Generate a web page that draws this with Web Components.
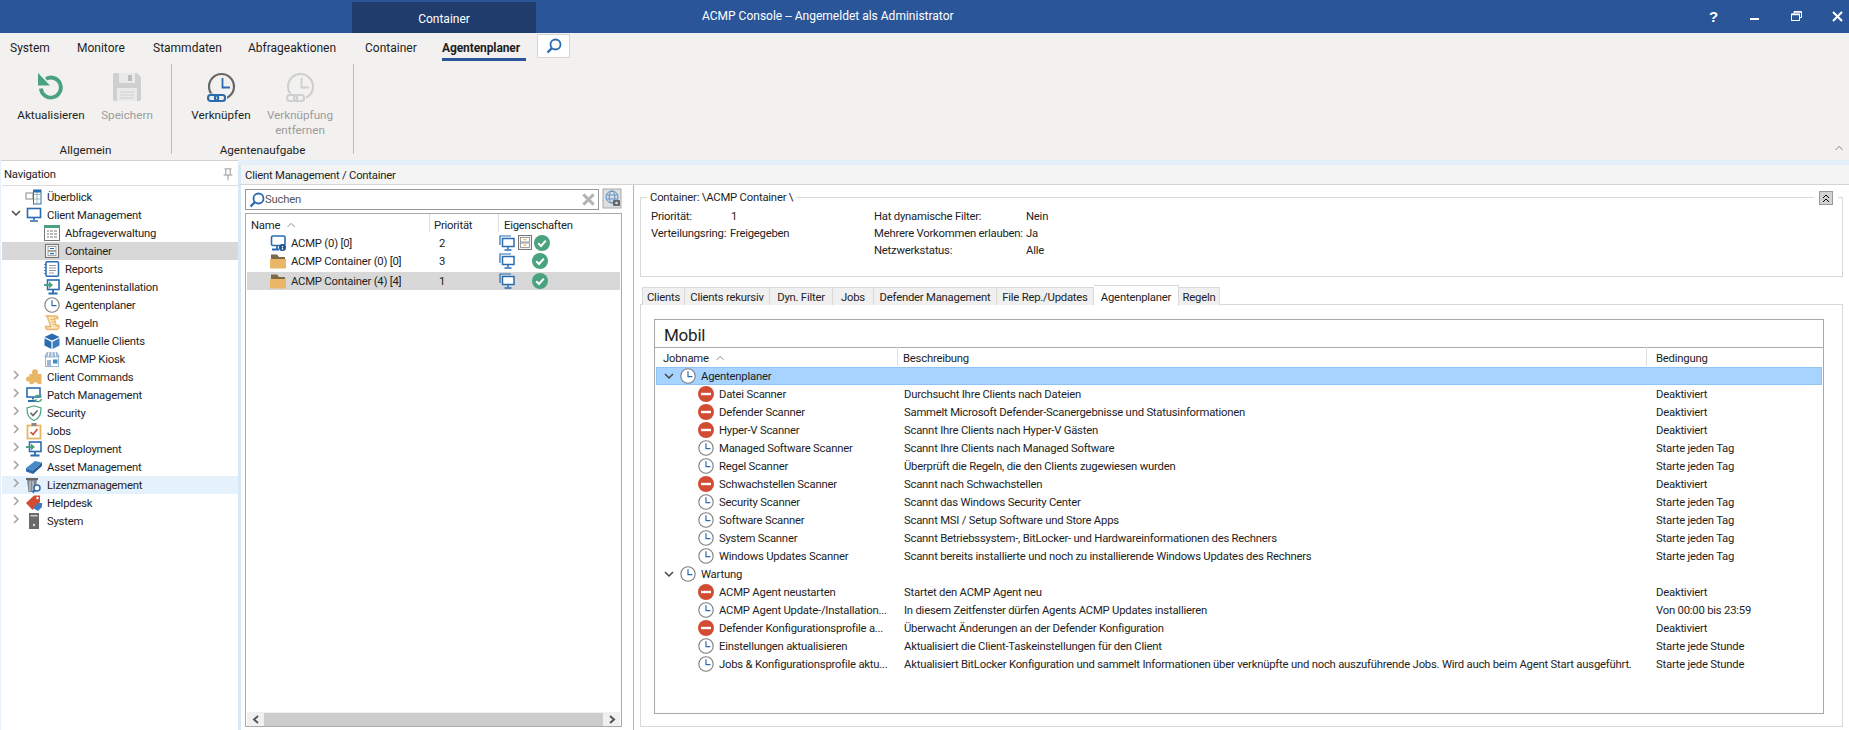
<!DOCTYPE html>
<html lang="de"><head><meta charset="utf-8"><title>ACMP Console</title>
<style>
html,body{margin:0;padding:0;background:#fff;overflow:hidden}
body{font:11.3px/16px Roboto,"Open Sans","Liberation Sans",sans-serif;letter-spacing:-.22px;color:#1e1e1e}
</style></head><body>
<acmp-window>
  <title-bar slot="title"></title-bar>
  <menu-bar slot="menu"></menu-bar>
  <ribbon-bar slot="ribbon"></ribbon-bar>
  <nav-panel slot="nav">
    <tree-row level="1" icon="overview">Überblick</tree-row>
    <tree-row level="1" icon="monitor" exp="open">Client Management</tree-row>
    <tree-row level="2" icon="table">Abfrageverwaltung</tree-row>
    <tree-row level="2" icon="drawer" state="sel">Container</tree-row>
    <tree-row level="2" icon="report">Reports</tree-row>
    <tree-row level="2" icon="install">Agenteninstallation</tree-row>
    <tree-row level="2" icon="clock">Agentenplaner</tree-row>
    <tree-row level="2" icon="scroll">Regeln</tree-row>
    <tree-row level="2" icon="cube">Manuelle Clients</tree-row>
    <tree-row level="2" icon="kiosk">ACMP Kiosk</tree-row>
    <tree-row level="1" icon="puzzle" exp="closed">Client Commands</tree-row>
    <tree-row level="1" icon="patch" exp="closed">Patch Management</tree-row>
    <tree-row level="1" icon="shield" exp="closed">Security</tree-row>
    <tree-row level="1" icon="clipboard" exp="closed">Jobs</tree-row>
    <tree-row level="1" icon="install" exp="closed">OS Deployment</tree-row>
    <tree-row level="1" icon="asset" exp="closed">Asset Management</tree-row>
    <tree-row level="1" icon="license" exp="closed" state="hover">Lizenzmanagement</tree-row>
    <tree-row level="1" icon="tag" exp="closed">Helpdesk</tree-row>
    <tree-row level="1" icon="tower" exp="closed">System</tree-row>
  </nav-panel>
  <content-area slot="content">
    <container-list slot="left">
      <list-row icon="clientinfo" prio="2" props="monitor drawer2 check">ACMP (0) [0]</list-row>
      <list-row icon="folder" prio="3" props="monitor gap check">ACMP Container (0) [0]</list-row>
      <list-row icon="folder" prio="1" props="monitor gap check" selected>ACMP Container (4) [4]</list-row>
    </container-list>
    <details-pane slot="right">
      <job-grid>
        <job-group title="Agentenplaner" selected>
          <job-row icon="stop" desc="Durchsucht Ihre Clients nach Dateien" cond="Deaktiviert">Datei Scanner</job-row>
          <job-row icon="stop" desc="Sammelt Microsoft Defender-Scanergebnisse und Statusinformationen" cond="Deaktiviert">Defender Scanner</job-row>
          <job-row icon="stop" desc="Scannt Ihre Clients nach Hyper-V Gästen" cond="Deaktiviert">Hyper-V Scanner</job-row>
          <job-row icon="clock" desc="Scannt Ihre Clients nach Managed Software" cond="Starte jeden Tag">Managed Software Scanner</job-row>
          <job-row icon="clock" desc="Überprüft die Regeln, die den Clients zugewiesen wurden" cond="Starte jeden Tag">Regel Scanner</job-row>
          <job-row icon="stop" desc="Scannt nach Schwachstellen" cond="Deaktiviert">Schwachstellen Scanner</job-row>
          <job-row icon="clock" desc="Scannt das Windows Security Center" cond="Starte jeden Tag">Security Scanner</job-row>
          <job-row icon="clock" desc="Scannt MSI / Setup Software und Store Apps" cond="Starte jeden Tag">Software Scanner</job-row>
          <job-row icon="clock" desc="Scannt Betriebssystem-, BitLocker- und Hardwareinformationen des Rechners" cond="Starte jeden Tag">System Scanner</job-row>
          <job-row icon="clock" desc="Scannt bereits installierte und noch zu installierende Windows Updates des Rechners" cond="Starte jeden Tag">Windows Updates Scanner</job-row>
        </job-group>
        <job-group title="Wartung">
          <job-row icon="stop" desc="Startet den ACMP Agent neu" cond="Deaktiviert">ACMP Agent neustarten</job-row>
          <job-row icon="clock" desc="In diesem Zeitfenster dürfen Agents ACMP Updates installieren" cond="Von 00:00 bis 23:59">ACMP Agent Update-/Installation...</job-row>
          <job-row icon="stop" desc="Überwacht Änderungen an der Defender Konfiguration" cond="Deaktiviert">Defender Konfigurationsprofile a...</job-row>
          <job-row icon="clock" desc="Aktualisiert die Client-Taskeinstellungen für den Client" cond="Starte jede Stunde">Einstellungen aktualisieren</job-row>
          <job-row icon="clock" desc="Aktualisiert BitLocker Konfiguration und sammelt Informationen über verknüpfte und noch auszuführende Jobs. Wird auch beim Agent Start ausgeführt." cond="Starte jede Stunde">Jobs &amp; Konfigurationsprofile aktu...</job-row>
        </job-group>
      </job-grid>
    </details-pane>
  </content-area>
</acmp-window>
<script>
const B='#2b6cb0',G='#4aa37e',R='#d24c34',O='#e9b566',Y='#777';
const monitor=(c=B)=>`<rect x="1.5" y="1.5" width="13" height="9" fill="#fff" stroke="${c}" stroke-width="1.6"/><path d="M8 11v2M4 14h8" stroke="${c}" stroke-width="1.6"/>`;
const chain=(c,bg)=>`<rect x="0" y="20.5" width="20" height="8.500" fill="${bg}"/><g fill="none" stroke="${c}" stroke-width="2.200"><rect x="1.100" y="22" width="10" height="6" rx="2.500"/><rect x="8" y="22" width="10" height="6" rx="2.500"/></g>`;
const ICONS={
clock:`<circle cx="8" cy="8" r="7.2" fill="#fff" stroke="#7d7d7d" stroke-width="1.1"/><path d="M8 3.2V8.7H12.4" fill="none" stroke="${B}" stroke-width="1.2"/>`,
stop:`<circle cx="8" cy="8" r="8" fill="${R}"/><rect x="3" y="6.8" width="10" height="2.4" fill="#fff"/>`,
check:`<circle cx="8" cy="8" r="8" fill="${G}"/><path d="M4.2 8.3L7 11l4.8-5.4" fill="none" stroke="#fff" stroke-width="2"/>`,
monitor:monitor(),
monitor2:`<path d="M1 10V1h11" fill="none" stroke="${B}" stroke-width="1.2"/><rect x="3.5" y="3.5" width="11.5" height="8" fill="#fff" stroke="${B}" stroke-width="1.5"/><path d="M9 12v2M5.5 15h7" stroke="${B}" stroke-width="1.5"/>`,
drawer2:`<rect x=".5" y=".5" width="13" height="14" fill="#f2f2f2" stroke="#777"/><rect x="2.500" y="2.500" width="9" height="4.500" fill="#fff" stroke="#888" stroke-width=".8"/><rect x="2.500" y="8" width="9" height="4.500" fill="#fff" stroke="#888" stroke-width=".8"/><path d="M5.500 4.700h3M5.500 10.200h3" stroke="${O}" stroke-width="1.200"/>`,
drawer:`<rect x="1.5" y="1.5" width="13" height="13" fill="#fff" stroke="#777" stroke-width="1.2"/><rect x="4" y="3.5" width="8" height="4" fill="#fff" stroke="#888" stroke-width=".8"/><rect x="4" y="8.7" width="8" height="4" fill="#fff" stroke="#888" stroke-width=".8"/><path d="M6 5.5h4M6 10.7h4" stroke="${B}" stroke-width="1.2"/>`,
overview:`<rect x="0" y="4" width="7" height="6" fill="#fff" stroke="#888"/><rect x="7.5" y="1" width="7.5" height="14" fill="#fff" stroke="${B}"/><path d="M7.5 5.5h7.5M7.5 10h7.5M11 1v14" stroke="#8aa" stroke-width=".8"/><rect x="7.5" y="1" width="7.5" height="2.5" fill="${B}"/>`,
table:`<rect x=".5" y=".5" width="15" height="15" fill="#fff" stroke="#777"/><rect x="0" y="0" width="16" height="3" fill="${G}"/><path d="M3 6h2m1 0h3m1 0h3M3 9h2m1 0h3m1 0h3M3 12h2m1 0h3m1 0h3" stroke="#777"/>`,
report:`<rect x="2" y=".8" width="12.5" height="14.4" rx="1" fill="#fff" stroke="${B}" stroke-width="1.5"/><path d="M5 4.5h7M5 7h7M5 9.5h7M5 12h5" stroke="#999"/><path d="M1 3v1m0 2v1m0 2v1m0 2v1" stroke="${B}" stroke-width="1.6"/>`,
install:`<rect x="3.5" y="1" width="11.5" height="9.5" fill="#fff" stroke="${B}" stroke-width="1.6"/><path d="M9 11v2.5M4.5 14.5h9" stroke="${B}" stroke-width="1.8"/><path d="M0 6h6" stroke="${G}" stroke-width="2"/><path d="M5 2.5L9 6 5 9.5z" fill="${G}"/>`,
scroll:`<path d="M1.500 1h10c1.500 0 2.500 1 2.500 2.500h-3.500c0 3 1.500 4 1.500 7h3c0 2.500-1 4-2.500 4H4c-2 0-2.500-1.500-2.500-3h5C6.500 8 4 6 4 3.500 4 2.500 3 1 1.500 1z" fill="#f7e3bd" stroke="${O}" stroke-width="1.300"/><path d="M6.500 4.500h3M7.500 7h3M8.500 9.500h2.500" stroke="${O}" stroke-width="1.100"/>`,
cube:`<path d="M8 .5L15.5 4 8 7.5.5 4z" fill="${B}"/><path d="M.5 5.2L7.4 8.7V16L.5 12.5z" fill="${B}"/><path d="M15.5 5.2L8.6 8.7V16l6.9-3.5z" fill="#3a7cbf"/>`,
kiosk:`<path d="M3 1h10l3 5H0z" fill="#9db8d4"/><path d="M5 1L4 6M8 1v5M11 1l1 5" stroke="#fff"/><rect x="1.5" y="6" width="13" height="9.5" fill="#fff" stroke="#9db8d4"/><rect x="3" y="9" width="4" height="6.5" fill="#9db8d4"/><rect x="9" y="8.5" width="4.5" height="4" fill="#3b8fc4"/>`,
puzzle:`<rect x="3.500" y="5" width="12" height="10" fill="${O}"/><circle cx="9" cy="3.200" r="3" fill="${O}"/><circle cx="2.600" cy="10" r="2.600" fill="${O}"/><circle cx="9.500" cy="15.500" r="2.200" fill="#fff"/>`,
patch:`<rect x="1" y="1" width="13" height="9" fill="#fff" stroke="${B}" stroke-width="1.6"/><path d="M7 10.500v2M2 14h8" stroke="${B}" stroke-width="1.8"/><path d="M8.500 11a3.500 3.500 0 0 1 6-1.500M15.500 12a3.500 3.500 0 0 1-6 1.500" fill="none" stroke="${G}" stroke-width="1.3"/><path d="M15.500 7.500v3h-3zM8.500 15.500v-3h3z" fill="${G}"/>`,
shield:`<path d="M8 .8L15 3c0 6-1 10-7 12.500C2 13 1 9 1 3z" fill="#fff" stroke="${G}" stroke-width="1.2"/><path d="M4.500 7.800L7 10.500 11.500 5.500" fill="none" stroke="#666" stroke-width="1.6"/>`,
clipboard:`<rect x="1.5" y="2.500" width="13" height="13" fill="#fff" stroke="${O}" stroke-width="1.8"/><rect x="5.500" y="0" width="5" height="3" fill="#888"/><path d="M4.500 9L7 11.500 11.500 6" fill="none" stroke="${R}" stroke-width="1.6"/>`,
asset:`<path d="M0 9L9 2l7 1.500-9 8z" fill="#4c8ac7"/><path d="M0 9l7 2.500V15L0 12.500z" fill="${B}"/><path d="M7 11.500l9-8V7l-9 8z" fill="#245d99"/>`,
license:`<path d="M1 3h10l-1.500 12H2.500z" fill="#7f8a90"/><rect x="0" y="1" width="12" height="2" fill="#666"/><path d="M4 4v10M7 4v10" stroke="#ddd"/><circle cx="11" cy="11" r="3" fill="#fff" stroke="${B}" stroke-width="1.5"/><path d="M8.800 13.200L6.500 15.500" stroke="${B}" stroke-width="2"/>`,
tag:`<path d="M0 8L8 0.500h6V7L6.500 15z" fill="${R}"/><circle cx="11.500" cy="3" r="1.200" fill="#fff"/><path d="M7 13l5-5h4v4l-4 4z" fill="#3a7cbf"/>`,
tower:`<rect x="3" y="0" width="10" height="16" fill="#6a6a6a"/><rect x="4.500" y="2" width="7" height="1.500" fill="#ccc"/><circle cx="8" cy="12" r="1.200" fill="#ddd"/>`,
clientinfo:`<rect x="1.500" y="1" width="13.500" height="9.500" rx="1.500" fill="#fff" stroke="${B}" stroke-width="1.600"/><path d="M7 11v2.500M2 14.500h7" stroke="${B}" stroke-width="1.800"/><circle cx="12.500" cy="12.500" r="3.500" fill="#23568f"/><path d="M12.500 11v.900M12.500 12.600v2" stroke="#fff" stroke-width="1.200"/>`,
folder:`<path d="M1 1.500h6l2 2.500h6v2H1z" fill="#7a6a45"/><path d="M0 6h16v8.500c0 .5-.5 1-1 1H1c-.5 0-1-.5-1-1z" fill="${O}"/>`,
refresh:`<path d="M9 5.800A10 10 0 1 1 3.900 15.500" fill="none" stroke="${G}" stroke-width="3.800"/><path d="M1 0v12.500h12z" fill="${G}"/>`,
save:`<path d="M0 2q0-2 2-2h22l4 4v22q0 2-2 2H2q-2 0-2-2z" fill="#cfcfcf"/><rect x="6" y="0" width="16" height="10" fill="#e9e9e9"/><rect x="15" y="2" width="4" height="6" fill="#bdbdbd"/><rect x="4" y="15" width="20" height="13" fill="#e9e9e9"/><path d="M7 19h14M7 22h14M7 25h14" stroke="#cfcfcf"/>`,
link:`<circle cx="14.500" cy="13.500" r="12.500" fill="none" stroke="#666" stroke-width="2.200"/><path d="M15.500 5V14.500H23" fill="none" stroke="${B}" stroke-width="1.800"/>${chain(B,'#f2f1ef')}`,
linkoff:`<circle cx="14.500" cy="13.500" r="12.500" fill="none" stroke="#cfcfcf" stroke-width="2.200"/><path d="M15.500 5V14.500H23" fill="none" stroke="#cfcfcf" stroke-width="1.800"/>${chain('#cfcfcf','#f2f1ef')}`,
search:`<circle cx="9.500" cy="6.500" r="5" fill="none" stroke="${B}" stroke-width="1.800"/><path d="M6 10L1.500 14.500" stroke="${B}" stroke-width="2.400"/>`,
globe:`<rect x="0" y="0" width="18" height="19" fill="#dedede" stroke="#aaa"/><circle cx="9" cy="8" r="6" fill="none" stroke="#5a93c8"/><ellipse cx="9" cy="8" rx="2.800" ry="6" fill="none" stroke="#5a93c8"/><path d="M3 6h12M3 10h12" stroke="#5a93c8"/><rect x="10" y="11" width="7" height="6" rx="1" fill="#666"/><circle cx="13.500" cy="14" r="1.300" fill="#dedede"/>`,
open:`<path d="M4 6l4 4 4-4" fill="none" stroke="#444" stroke-width="1.500"/>`,
closed:`<path d="M6 4l4 4-4 4" fill="none" stroke="#a5a5a5" stroke-width="1.600"/>`,
up:`<path d="M3 9l4-4 4 4" fill="none" stroke="#777" stroke-width="1"/>`,
pin:`<path d="M4 1h8M5.500 1.500v6M10.500 1.500v6M3 8h10M8 8v6" fill="none" stroke="#888"/>`,
x:`<path d="M2.500 2.500L13.500 13.500M13.500 2.500L2.500 13.500" stroke="#b4b4b4" stroke-width="3.200"/>`
};
function def(name,css,html){customElements.define(name,class extends HTMLElement{
  constructor(){super();this.attachShadow({mode:'open'}).innerHTML=`<style>${css}</style>${typeof html==='function'?'':html}`}
  connectedCallback(){if(typeof html==='function'&&!this._d){this._d=1;this.shadowRoot.innerHTML+=html(this)}}
})}
def('ui-icon',':host{display:inline-flex;flex:none}svg{display:block;overflow:visible}',e=>{
  const s=e.getAttribute('size')||16,v=e.getAttribute('vb')||16;
  return `<svg width="${s}" height="${s}" viewBox="0 0 ${v} ${v}">${ICONS[e.getAttribute('name')]||''}</svg>`});
def('acmp-window',`:host{display:grid;width:1849px;height:730px;overflow:hidden;grid-template-rows:33px 29px 98px 1fr;grid-template-columns:238px 1fr;grid-template-areas:"t t" "m m" "r r" "n c";background:#fff}
 ::slotted([slot=title]){grid-area:t}::slotted([slot=menu]){grid-area:m}::slotted([slot=ribbon]){grid-area:r}::slotted([slot=nav]){grid-area:n}::slotted([slot=content]){grid-area:c}`,
 `<slot name="title"></slot><slot name="menu"></slot><slot name="ribbon"></slot><slot name="nav"></slot><slot name="content"></slot>`);
def('title-bar',`:host{display:grid;grid-template-columns:352px 184px 1fr 41px 41px 41px 32px;background:#2a5699;color:#fff;line-height:33px;align-items:center;letter-spacing:0;font-variant-ligatures:none}
 .ctx{grid-column:2;background:#1f3c6d;text-align:center;height:33px;line-height:35px;font-size:12px}
 .t{padding-left:166px;font-size:12px;padding-bottom:3px}.b{display:flex;padding-left:15px;height:20px;align-items:center;margin-bottom:4px}
 .q{font:bold 15px "Liberation Sans";padding-left:15px}svg{display:block}`,
 `<div class="ctx">Container</div><div class="t">ACMP Console -- Angemeldet als Administrator</div>
 <div class="b q">?</div>
 <div class="b"><svg width="10" height="10"><rect y="7" width="9" height="2" fill="#fff"/></svg></div>
 <div class="b"><svg width="11" height="11" fill="none" stroke="#fff"><path d="M3 2.500V.5h7.500v6h-2"/><rect x=".5" y="3" width="8" height="6.500"/><path d="M1 3.500h7M3 1h7" stroke-width="1.400"/></svg></div>
 <div class="b"><svg width="11" height="11"><path d="M1 1l9 9M10 1l-9 9" stroke="#fff" stroke-width="2"/></svg></div>`);
def('menu-bar',`:host{display:grid;grid-template-columns:10px 67px 76px 95px 117px 77px 95px auto 1fr;background:#f2f1ef;height:29px;align-items:start;line-height:31px;font-size:12px;letter-spacing:0}
 .on{font-weight:700;height:28px;width:84px;border-bottom:3px solid #2a5699;box-sizing:border-box;white-space:nowrap;letter-spacing:-.1px}
 .s{width:33px;height:24px;background:#fff;border:1px solid #d6d6d6;box-sizing:border-box;margin-top:1px;display:flex;align-items:center;justify-content:center}
 i{font-style:normal}`,
 `<i></i><i>System</i><i>Monitore</i><i>Stammdaten</i><i>Abfrageaktionen</i><i>Container</i><span class="on">Agentenplaner</span><span class="s"><ui-icon name="search"></ui-icon></span>`);
def('ribbon-bar',`:host{display:flex;background:#f2f1ef;line-height:15px;border-bottom:1px solid #d6d0cc;box-sizing:border-box;height:99px;font-size:11.700px;letter-spacing:0}
 .g{display:grid;grid-template-rows:72px 17px;border-right:1px solid #bdbdbd;height:90px;margin-top:2px;box-sizing:border-box;padding-top:7px}
 .g1{width:172px;padding-left:13px;box-sizing:border-box}.g2{width:182px}
 .bs{display:flex}.btn{display:flex;flex-direction:column;align-items:center;text-align:center}
 .ic{height:32px;margin-bottom:5px;display:flex;align-items:center}.off{color:#9c9c9c}
 .l{text-align:center;margin-left:-13px}.g2 .l{margin:0}
 .u{margin-left:auto;align-self:flex-end;margin-right:2px;margin-bottom:4px}`,
 `<div class="g g1"><div class="bs"><div class="btn" style="width:76px"><div class="ic"><ui-icon name="refresh" size="28" vb="28"></ui-icon></div>Aktualisieren</div>
 <div class="btn off" style="width:76px"><div class="ic"><ui-icon name="save" size="28" vb="28"></ui-icon></div>Speichern</div></div><div class="l">Allgemein</div></div>
 <div class="g g2"><div class="bs"><div class="btn" style="width:98px"><div class="ic"><ui-icon name="link" size="28" vb="28"></ui-icon></div>Verknüpfen</div>
 <div class="btn off" style="width:60px"><div class="ic"><ui-icon name="linkoff" size="28" vb="28"></ui-icon></div>Verknüpfung entfernen</div></div><div class="l">Agentenaufgabe</div></div>
 <ui-icon class="u" name="up" size="14"></ui-icon>`);
def('nav-panel',`:host{display:block;padding:5px 0 0 1px;border-left:1px solid #e8f1f9;box-sizing:border-box;min-height:0}
 .h{display:flex;justify-content:space-between;align-items:center;height:20px;padding:0 3px 0 2px;border:1px solid #dcdcdc;border-width:0 0 1px;margin-bottom:2px}`,
 `<div class="h">Navigation<ui-icon name="pin" size="14"></ui-icon></div><slot></slot>`);
def('tree-row',`:host{display:flex;align-items:center;height:18px;white-space:nowrap}
 :host([state=sel]){background:#d8d8d8}:host([state=hover]){background:#e5f1fb}
 :host([level="1"]){padding-left:6px}:host([level="2"]){padding-left:42px}
 .e{width:16px;flex:none}.i{margin:0 5px 0 2px}:host([level="2"]) .i{margin:0 5px 0 0}.x{padding-top:2px}`,
 e=>`${e.getAttribute('level')==='1'?`<span class="e">${e.hasAttribute('exp')?`<ui-icon name="${e.getAttribute('exp')}"></ui-icon>`:''}</span>`:''}<ui-icon class="i" name="${e.getAttribute('icon')}"></ui-icon><span class="x"><slot></slot></span>`);
def('content-area',`:host{display:grid;grid-template-columns:7px 377px 18px 1fr;grid-template-rows:5px 20px 1fr;min-height:0}
 .b{grid-column:1/-1;background:#e4eff9}.c{grid-column:1/-1;background:#f4f4f4;border-bottom:1px solid #d4d4d4;border-left:3px solid #d6e9f8;padding-left:4px;line-height:21px}
 .sp{background:linear-gradient(90deg,#d6e9f8 3px,#fff 3px)}.d:after{content:"";display:block;width:1px;height:100%;background:#b5b5b5;margin-left:11px}
 ::slotted([slot=left]){min-height:0}`,
 `<div class="b"></div><div class="c">Client Management / Container</div><div class="sp"></div><slot name="left"></slot><div class="d"></div><slot name="right"></slot>`);
def('container-list',`:host{display:grid;grid-template-rows:21px 1fr;gap:3px;padding:4px 0 3px;box-sizing:border-box}
 .top{display:flex;justify-content:space-between}.s{width:354px;box-sizing:border-box;border:1px solid #999;display:flex;align-items:center;padding:0 2px 0 3px;color:#555}
 .s ui-icon:last-child{margin-left:auto}.box{border:1px solid #aaa;display:grid;grid-template-rows:20px 1fr 14px;padding:0 1px 0 0;min-height:0}
 .h{display:grid;grid-template-columns:183px 69px 1fr;line-height:24px}.h span{padding-left:5px;white-space:nowrap}.h span+span{border-left:1px solid #dfdfdf;height:18px;padding-left:4px}.h span+span+span{padding-left:5px}
 .h ui-icon{vertical-align:middle;margin-left:5px}
 .sb{display:grid;grid-template-columns:17px 1fr 17px;background:#f0f0f0;margin-left:1px;align-items:center}.th{background:#cdcdcd;height:13px}
 .sb svg{display:block;margin:auto}`,
 `<div class="top"><div class="s"><ui-icon name="search"></ui-icon>Suchen<ui-icon name="x" size="15"></ui-icon></div><ui-icon name="globe" size="19" vb="19"></ui-icon></div>
 <div class="box"><div class="h"><span>Name<ui-icon name="up" size="14"></ui-icon></span><span>Priorität</span><span>Eigenschaften</span></div>
 <div><slot></slot></div>
 <div class="sb"><svg width="8" height="9"><path d="M6 1L2 4.500 6 8" fill="none" stroke="#555" stroke-width="2"/></svg><div class="th"></div><svg width="8" height="9"><path d="M2 1l4 3.500L2 8" fill="none" stroke="#555" stroke-width="2"/></svg></div></div>`);
def('list-row',`:host{display:grid;grid-template-columns:183px 69px 1fr;height:18px;align-items:center;margin-left:1px;white-space:nowrap}
 :host([selected]){background:#d8d8d8;margin-top:2px}
 .n{display:flex;align-items:center;padding-left:23px;gap:5px}.p{padding:2px 0 0 9px}.x{padding-top:2px}.pr{display:flex;align-items:center}.gap{width:17px}.dr{margin:0 0 0 3px}`,
 e=>`<div class="n"><ui-icon name="${e.getAttribute('icon')}"></ui-icon><span class="x"><slot></slot></span></div><div class="p">${e.getAttribute('prio')}</div><div class="pr">${e.getAttribute('props').split(' ').map(p=>p==='gap'?'<span class="gap"></span>':`<ui-icon ${p==='drawer2'?'class="dr"':''} name="${p==='monitor'?'monitor2':p}"></ui-icon>`).join('')}</div>`);
def('details-pane',`:host{display:grid;grid-template-rows:auto 1fr;margin-right:6px;min-height:0;padding-bottom:3px;box-sizing:border-box}
 .fs{border:1px solid #d8d8d8;height:80px;margin-top:12px;box-sizing:border-box;position:relative;display:grid;grid-template-columns:223px 152px 1fr;grid-auto-rows:17px;padding:10px 0 0 10px;line-height:17px;align-content:start;white-space:nowrap}
 .leg{position:absolute;left:6px;top:-8px;background:#fff;padding:0 3px;line-height:16px}
 .col{position:absolute;right:9px;top:-7px;width:14px;height:14px;background:#d2d2d2;border:1px solid #9a9a9a;box-sizing:border-box;box-shadow:5px 0 0 #fff,-5px 0 0 #fff;display:flex;align-items:center;justify-content:center}
 .r{display:flex}.r b{font-weight:400;width:79px}.tabs{display:flex;margin-top:9px;padding-left:2px;align-items:flex-end;height:19px;position:relative}
 .tabs span{box-sizing:border-box;height:18px;line-height:19px;text-align:center;background:#f0f0f0;border:1px solid #d9d9d9;border-width:1px 1px 0 0;white-space:nowrap}
 .tabs span:first-child{border-left:1px solid #d9d9d9}.tabs .on{background:#fff;height:21px;line-height:23px;margin-bottom:-1px;position:relative;z-index:1}
 .pane{border:1px solid #d8d8d8;padding:14px 18px 12px 13px;min-height:0;display:grid;margin-top:-1px}`,
 `<div><div class="fs"><div class="leg">Container: \\ACMP Container \\</div>
 <div class="col"><svg width="8" height="9" fill="none" stroke="#000"><path d="M1 4l3-3 3 3M1 8l3-3 3 3"/></svg></div>
 <div class="r"><b>Priorität:</b><span style="padding-left:1px">1</span></div><div>Hat dynamische Filter:</div><div>Nein</div>
 <div class="r"><b>Verteilungsring:</b>Freigegeben</div><div>Mehrere Vorkommen erlauben:</div><div>Ja</div>
 <div></div><div>Netzwerkstatus:</div><div>Alle</div></div>
 <div class="tabs"><span style="width:43px">Clients</span><span style="width:85px">Clients rekursiv</span><span style="width:63px">Dyn. Filter</span><span style="width:41px">Jobs</span><span style="width:123px">Defender Management</span><span style="width:97px">File Rep./Updates</span><span class="on" style="width:85px">Agentenplaner</span><span style="width:41px">Regeln</span></div></div>
 <div class="pane"><slot></slot></div>`);
def('job-grid',`:host{display:grid;grid-template-rows:27px 20px 1fr;border:1px solid #a8a8a8;border-bottom:1px solid #a8a8b0;box-sizing:border-box;min-height:0}
 .t{font-size:17px;line-height:31px;height:27px;padding-left:9px;border-bottom:1px solid #aaa;box-sizing:content-box}
 .h{display:grid;grid-template-columns:242px 749px 1fr;line-height:23px}.h span{padding-left:8px;height:19px}.h span+span{border-left:1px solid #dfdfdf;padding-left:5px}.h span+span+span{padding-left:9px}.h ui-icon{vertical-align:middle;margin-left:5px}
 .b{padding:0 1px}`,
 `<div class="t">Mobil</div><div class="h"><span>Jobname<ui-icon name="up" size="14"></ui-icon></span><span>Beschreibung</span><span>Bedingung</span></div><div class="b"><slot></slot></div>`);
def('job-group',`:host{display:block}.g{display:flex;align-items:center;height:18px;padding-left:5px;gap:3px;box-sizing:border-box}
 :host([selected]) .g{background:#a6d3ff;border:1px solid #8dc4f5;padding-left:4px}.x{margin-left:2px;padding-top:2px}`,
 e=>`<div class="g"><ui-icon name="open"></ui-icon><ui-icon name="clock"></ui-icon><span class="x">${e.getAttribute('title')}</span></div><slot></slot>`);
def('job-row',`:host{display:grid;grid-template-columns:242px 749px 1fr;height:18px;align-items:center;white-space:nowrap}
 .n{display:flex;align-items:center;padding-left:42px;gap:5px;overflow:hidden}.d{padding:2px 0 0 6px}.c{padding:2px 0 0 9px}.x{padding-top:2px}`,
 e=>`<div class="n"><ui-icon name="${e.getAttribute('icon')}"></ui-icon><span class="x"><slot></slot></span></div><div class="d">${e.getAttribute('desc')}</div><div class="c">${e.getAttribute('cond')}</div>`);
</script>
</body></html>
